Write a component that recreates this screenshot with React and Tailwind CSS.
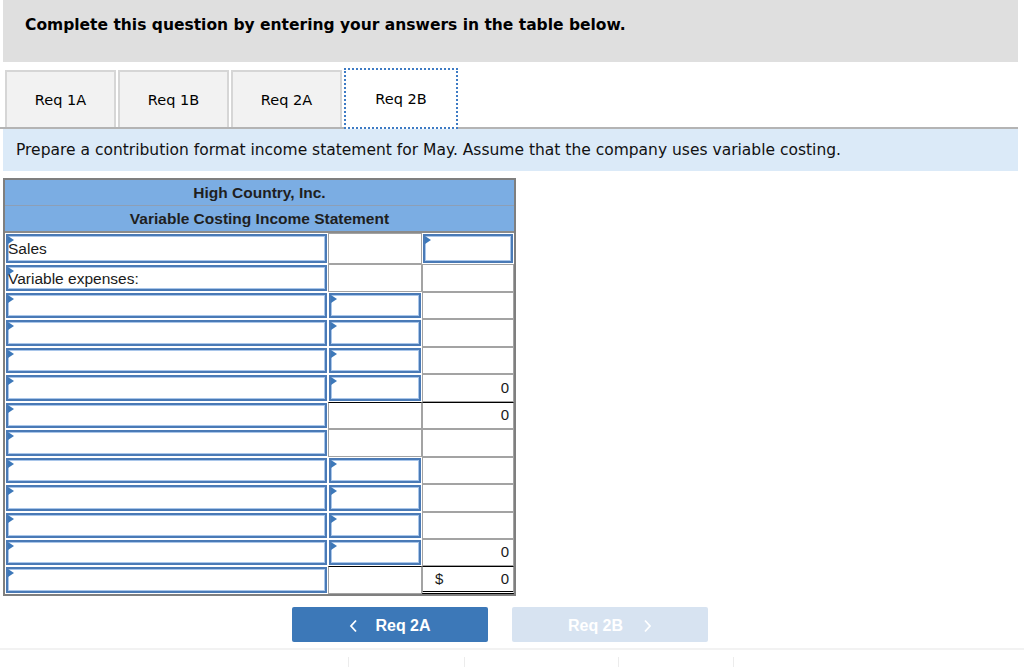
import React from 'react';

const tabs = ['Req 1A', 'Req 1B', 'Req 2A', 'Req 2B'];

// each row: label, which columns hold an input, the total shown in col 3
const rows = [
    { label: 'Sales', a: true, b: false, c: true, h: 'h-[31px]' },
    { label: 'Variable expenses:', a: true, b: false, c: false, h: 'h-[28px]' },
    { a: true, b: true, h: 'h-[27px]' },
    { a: true, b: true, h: 'h-[28px]' },
    { a: true, b: true, h: 'h-[27px]' },
    { a: true, b: true, value: '0', h: 'h-[28px]' },
    { a: true, b: false, value: '0', rule: true, h: 'h-[27px]' },
    { a: true, b: false, h: 'h-[28px]' },
    { a: true, b: true, h: 'h-[27px]' },
    { a: true, b: true, h: 'h-[28px]' },
    { a: true, b: true, h: 'h-[27px]' },
    { a: true, b: true, value: '0', h: 'h-[27px]' },
    { a: true, b: false, value: '0', dollar: true, rule: true, total: true, h: 'h-[28px]' },
];

function Marker() {
    return (
        <span className="absolute left-0 top-0 w-0 h-0 border-t-[4px] border-b-[4px] border-l-[6px] border-t-transparent border-b-transparent border-l-[#3d78b9]" />
    );
}

function Cell({ input, width, children, extra = '' }) {
    if (input) {
        return (
            <div className={`${width} h-full p-[1px] ${extra}`}>
                <div className="relative w-full h-full bg-white border-2 border-[#4a7ab6] shadow-[inset_0_0_0_1px_#a9c6ea] flex items-center">
                    <Marker />
                    {children}
                </div>
            </div>
        );
    }
    return (
        <div className={`${width} h-full border border-[#a3a3a3] bg-white flex items-center ${extra}`}>
            {children}
        </div>
    );
}

function App() {
    return (
        <div className="w-[1024px] h-[667px] bg-white overflow-hidden relative font-['DejaVu_Sans',sans-serif] text-[#111]">
            <div className="mx-[3px] w-[1015px]">
                {/* Instruction banner */}
                <div className="h-[62px] bg-[#dfdfdf] pl-[22px] pt-[14px]">
                    <p className="text-[15.5px] font-bold leading-[22px] text-black">
                        Complete this question by entering your answers in the table below.
                    </p>
                </div>

                {/* Tabs */}
                <div className="flex items-end pl-[2px] mt-[6px] h-[59px] gap-[2px]">
                    {tabs.map((t, i) => (
                        <div
                            key={t}
                            className={
                                i === 3
                                    ? 'w-[114px] h-[61px] -mb-[2px] pt-[2px] bg-white border-2 border-dotted border-[#3e7bc4] flex items-center justify-center text-[14.5px] text-black relative z-10'
                                    : 'w-[111px] h-[57px] pt-[2px] bg-[#f2f2f2] border-2 border-b-0 border-[#d6d6d6] flex items-center justify-center text-[14.5px] text-black'
                            }
                        >
                            {t}
                        </div>
                    ))}
                </div>
                <div className="h-[2px] bg-[#b4b4b4] -ml-[3px] w-[1018px]" />
                <div className="h-[42px] bg-[#dbeaf8] pl-[13px] pt-[2px] flex items-center">
                    <p className="text-[15.5px] text-[#111]">
                        Prepare a contribution format income statement for May. Assume that the company uses variable costing.
                    </p>
                </div>

                {/* Statement table */}
                <div className="mt-[7px] w-[513px] border-2 border-[#7f7f7f] font-['Liberation_Sans',Arial,sans-serif]">
                    <div className="h-[26px] bg-[#7badE3] border-b border-[#8d9fb6] flex items-center justify-center text-[15.5px] font-bold text-[#1f1f1f]">
                        High Country, Inc.
                    </div>
                    <div className="h-[27px] bg-[#7badE3] border-b-2 border-[#8b8b8b] flex items-center justify-center text-[15.5px] font-bold text-[#1f1f1f]">
                        Variable Costing Income Statement
                    </div>
                    {rows.map((r, i) => (
                        <div key={i} className={`flex ${r.h}`}>
                            <Cell input={r.a} width="w-[323px]">
                                {r.label && (
                                    <span className="pt-[1px] text-[15.5px] text-[#1a1a1a]">{r.label}</span>
                                )}
                            </Cell>
                            <Cell input={r.b} width="w-[94px]" extra={r.rule ? 'border-t border-t-black' : ''} />
                            <Cell
                                input={r.c}
                                width="w-[92px]"
                                extra={`${r.rule ? 'border-t border-t-black' : ''} ${r.total ? 'border-b-[3px] border-b-black border-double' : ''}`}
                            >
                                {r.value && (
                                    <div className="w-full flex justify-between pr-[4px] pl-[12px] text-[15px] text-[#1a1a1a]">
                                        <span>{r.dollar ? '$' : ''}</span>
                                        <span>{r.value}</span>
                                    </div>
                                )}
                            </Cell>
                        </div>
                    ))}
                </div>

                {/* Navigation */}
                <div className="flex mt-[11px] ml-[289px] gap-[24px] font-['Liberation_Sans',Arial,sans-serif]">
                    <button className="w-[196px] h-[35px] pt-[3px] bg-[#3c78b8] rounded-[2px] flex items-center justify-center gap-[17px] text-white text-[16px] font-bold">
                        <svg width="9" height="14" viewBox="0 0 9 14" fill="none" stroke="white" strokeWidth="1.8">
                            <polyline points="7,1.5 2,7 7,12.5" />
                        </svg>
                        Req 2A
                    </button>
                    <button className="w-[196px] h-[35px] pt-[3px] bg-[#d7e3f1] rounded-[2px] flex items-center justify-center gap-[20px] text-white text-[16px] font-bold">
                        Req 2B
                        <svg width="9" height="14" viewBox="0 0 9 14" fill="none" stroke="white" strokeWidth="1.8">
                            <polyline points="2,1.5 7,7 2,12.5" />
                        </svg>
                    </button>
                </div>
            </div>

            {/* Footer strip */}
            <div className="mt-[6px] h-[2px] bg-[#f2f2f2] w-full" />
            <div className="flex h-[10px] mt-[7px]">
                <div className="w-[349px] border-r border-[#ececec]" />
                <div className="w-[116px] border-r border-[#ececec]" />
                <div className="w-[154px] border-r border-[#ececec]" />
                <div className="w-[115px] border-r border-[#ececec]" />
            </div>
        </div>
    );
}

export default App;
